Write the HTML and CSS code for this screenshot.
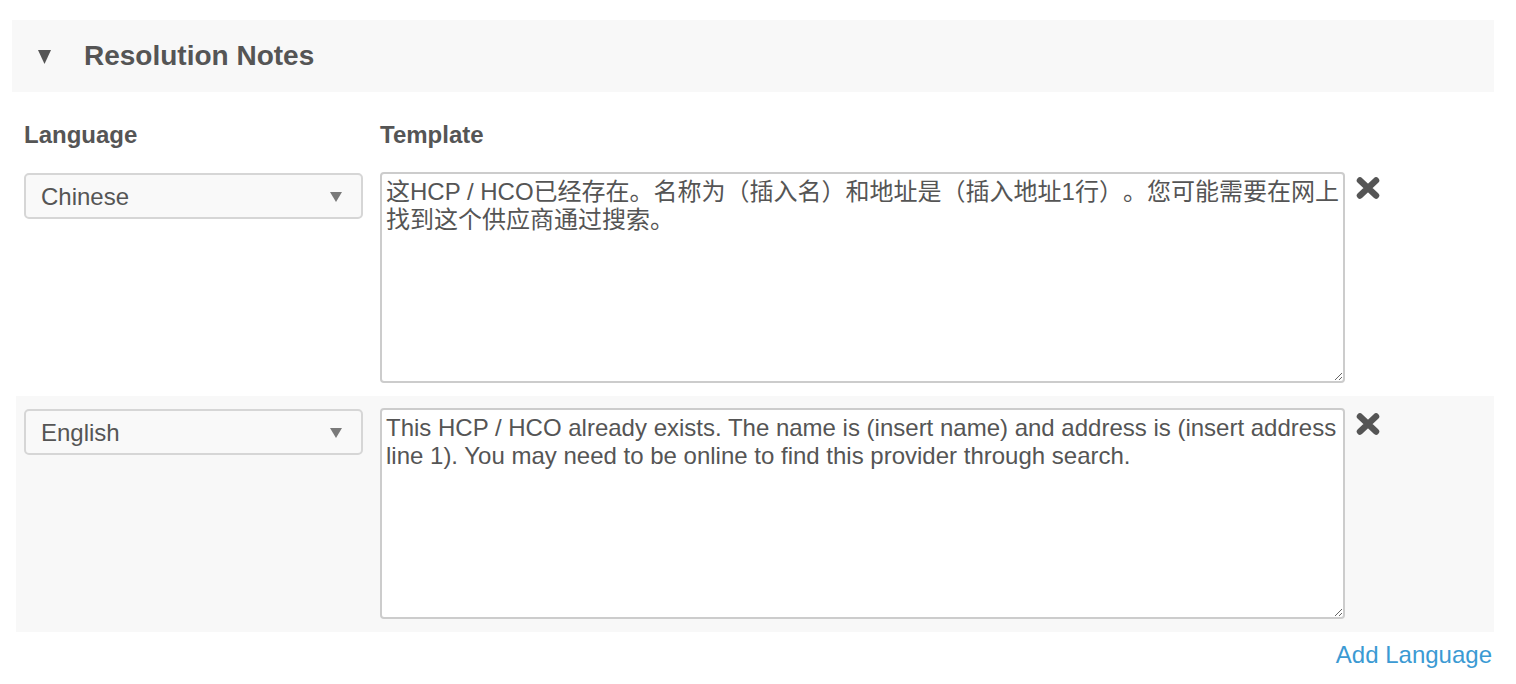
FILE: index.html
```html
<!DOCTYPE html>
<html>
<head>
<meta charset="utf-8">
<link rel="stylesheet" href="styles.css">
</head>
<body>
<section class="panel">
  <div class="panel-header">
    <svg class="caret" width="13" height="14" viewBox="0 0 13 14"><polygon points="0,0 13,0 6.5,14" fill="#555"/></svg>
    <h2 class="panel-title">Resolution Notes</h2>
  </div>
  <div class="labels">
    <div class="label lang-col">Language</div>
    <div class="label">Template</div>
  </div>
  <div class="row">
    <div class="select lang-col"><span>Chinese</span><svg width="12" height="10" viewBox="0 0 12 10"><polygon points="0,0 12,0 6,10" fill="#7a7a7a"/></svg></div>
    <textarea class="template">这HCP / HCO已经存在。名称为（插入名）和地址是（插入地址1行）。您可能需要在网上找到这个供应商通过搜索。</textarea>
    <svg class="remove" width="24" height="22" viewBox="0 0 24 22"><path d="M4 3.5 L20 18.5 M20 3.5 L4 18.5" stroke="#555" stroke-width="6.5" stroke-linecap="round"/></svg>
  </div>
  <div class="row alt">
    <div class="select lang-col"><span>English</span><svg width="12" height="10" viewBox="0 0 12 10"><polygon points="0,0 12,0 6,10" fill="#7a7a7a"/></svg></div>
    <textarea class="template">This HCP / HCO already exists. The name is (insert name) and address is (insert address line 1). You may need to be online to find this provider through search.</textarea>
    <svg class="remove" width="24" height="22" viewBox="0 0 24 22"><path d="M4 3.5 L20 18.5 M20 3.5 L4 18.5" stroke="#555" stroke-width="6.5" stroke-linecap="round"/></svg>
  </div>
  <div class="actions"><a class="add-link" href="#">Add Language</a></div>
</section>
</body>
</html>
```

FILE: styles.css
```css
html, body {
  margin: 0;
  padding: 0;
  background: #fff;
}
body {
  font-family: "Liberation Sans", "Noto Sans CJK SC", Arial, sans-serif;
  color: #555;
  font-size: 24px;
  line-height: 28px;
}
.panel {
  width: 1494px;
  padding-top: 20px;
}
.panel-header {
  margin-left: 12px;
  height: 72px;
  background: #f8f8f8;
  display: flex;
  align-items: center;
  padding-left: 26px;
}
.caret {
  margin-top: 2px;
  margin-right: 33px;
}
.panel-title {
  margin: 0;
  font-size: 28px;
  font-weight: bold;
  color: #555;
  line-height: 32px;
}
.labels {
  display: flex;
  margin-left: 16px;
  padding: 29px 0 11px 8px;
}
.label {
  font-weight: bold;
  font-size: 24px;
  line-height: 28px;
}
.lang-col {
  width: 339px;
  flex: none;
  margin-right: 17px;
  box-sizing: border-box;
}
.row {
  display: flex;
  align-items: flex-start;
  margin-left: 16px;
  padding: 12px 0 13px 8px;
}
.row.alt {
  background: #f8f8f8;
}
.select {
  height: 46px;
  margin-top: 1px;
  border: 2px solid #d6d6d6;
  border-radius: 5px;
  background: #f9f9f9;
  display: flex;
  align-items: center;
  justify-content: space-between;
  padding: 1px 19px 0 15px;
}
.template {
  width: 965px;
  height: 211px;
  box-sizing: border-box;
  border: 2px solid #cccccc;
  border-radius: 4px;
  padding: 4px;
  margin: 0;
  font-family: "Liberation Sans", "Noto Sans CJK SC", Arial, sans-serif;
  font-size: 24px;
  line-height: 28px;
  color: #555;
  background: #fff;
  resize: vertical;
  flex: none;
  overflow: hidden;
  text-spacing-trim: space-all;
  font-feature-settings: "halt" 0, "chws" 0;
}
.remove {
  margin-left: 11px;
  margin-top: 5px;
  flex: none;
}
.actions {
  display: flex;
  justify-content: flex-end;
  padding: 9px 2px 0 0;
}
.add-link {
  color: #3b9ad3;
  text-decoration: none;
  font-size: 24px;
  line-height: 28px;
}
```
